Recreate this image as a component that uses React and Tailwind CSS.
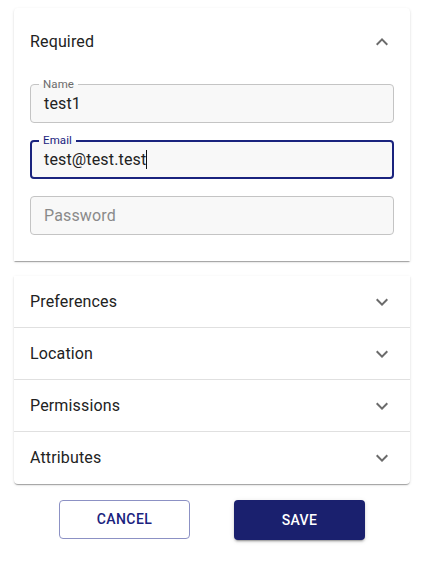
import React from 'react';

const Chevron = ({ up }) => (
    <svg viewBox="0 0 24 24" className="w-6 h-6 fill-[#6b6b6b]">
        {up
            ? <path d="M7.41 15.41 12 10.83l4.59 4.58L18 14l-6-6-6 6z" />
            : <path d="M7.41 8.59 12 13.17l4.59-4.58L18 10l-6 6-6-6z" />}
    </svg>
);

const Field = ({ label, value, placeholder, focused }) => (
    <div
        className={`relative h-[39px] rounded-[4px] bg-[#f8f8f8] flex items-center px-[13px] ${
            focused ? 'border-2 border-[#1a237e]' : 'border border-[#c4c4c4]'
        }`}
    >
        {label && (
            <span
                className={`absolute px-[4px] text-[11.5px] leading-[14px] tracking-[0.1px] bg-gradient-to-b from-white from-50% to-[#f8f8f8] to-50% ${
                    focused ? 'text-[#1a237e] -top-[9px] left-[7px]' : 'text-[#6b6b6b] -top-[8px] left-[8px]'
                }`}
            >
                {label}
            </span>
        )}
        {value ? (
            <span className={`text-[16px] tracking-[0.15px] text-[#222] ${focused ? '-ml-px mt-[1px]' : 'mt-[1px]'}`}>
                {value}
                {focused && <span className="inline-block w-px h-[19px] bg-[#111] align-[-4px]" />}
            </span>
        ) : (
            <span className="text-[16px] tracking-[0.15px] text-[#8a8a8a]">{placeholder}</span>
        )}
    </div>
);

const sections = ['Preferences', 'Location', 'Permissions', 'Attributes'];

export default function App() {
    return (
        <div className="bg-white min-h-[567px] pt-2 font-['Roboto',sans-serif] text-[#222]">
            <div className="ml-[14px] w-[396px]">
                <div className="bg-white rounded-t-[4px] shadow-[0_2px_1px_-1px_rgba(0,0,0,0.2),0_1px_1px_0_rgba(0,0,0,0.14),0_1px_3px_0_rgba(0,0,0,0.12)]">
                    <div className="h-[68px] flex items-center justify-between pl-4 pr-4">
                        <span className="text-[16px] tracking-[0.15px]">Required</span>
                        <Chevron up />
                    </div>
                    <div className="px-4 pt-2 pb-[26px] flex flex-col gap-[17px]">
                        <Field label="Name" value="test1" />
                        <Field label="Email" value="test@test.test" focused />
                        <Field placeholder="Password" />
                    </div>
                </div>

                <div className="mt-[15px] bg-white rounded-b-[4px] shadow-[0_2px_1px_-1px_rgba(0,0,0,0.2),0_1px_1px_0_rgba(0,0,0,0.14),0_1px_3px_0_rgba(0,0,0,0.12)]">
                    {sections.map((s, i) => (
                        <div
                            key={s}
                            className={`h-[52px] flex items-center justify-between px-4 ${
                                i < sections.length - 1 ? 'border-b border-[#e0e0e0]' : ''
                            }`}
                        >
                            <span className="text-[16px] tracking-[0.15px]">{s}</span>
                            <Chevron />
                        </div>
                    ))}
                </div>

                <div className="mt-4 flex justify-center gap-[44px]">
                    <button className="w-[131px] h-[39px] rounded-[4px] border border-[#8c91c4] text-[#1a237e] text-[14px] font-medium tracking-[0.4px] uppercase">
                        Cancel
                    </button>
                    <button className="w-[131px] h-[40px] rounded-[4px] bg-[#1a206e] text-white text-[14px] font-medium tracking-[0.4px] uppercase shadow-[0_3px_1px_-2px_rgba(0,0,0,0.2),0_2px_2px_0_rgba(0,0,0,0.14),0_1px_5px_0_rgba(0,0,0,0.12)]">
                        Save
                    </button>
                </div>
            </div>
        </div>
    );
}
